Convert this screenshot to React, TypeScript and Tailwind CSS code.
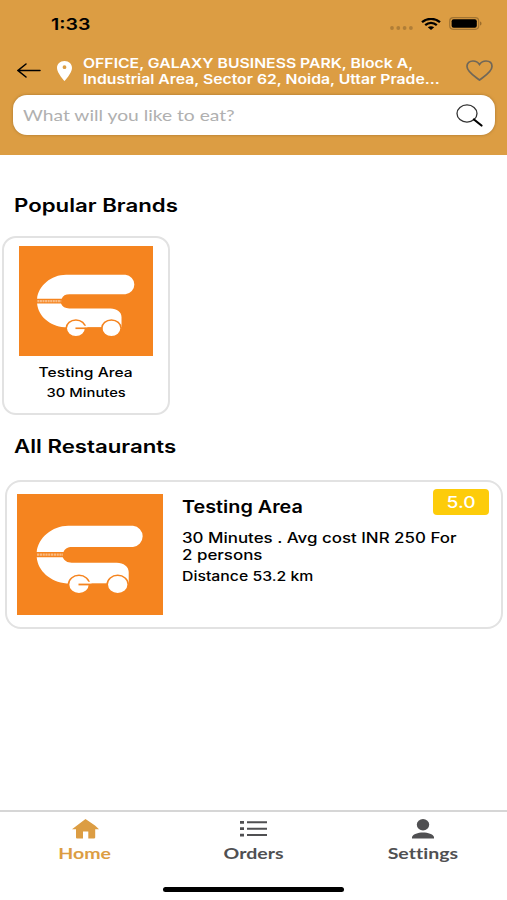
import React from 'react';

const Logo: React.FC<{ className?: string }> = ({ className }) => (
  <svg className={className} viewBox="0 0 146 121" preserveAspectRatio="none">
    <rect width="146" height="121" fill="#f5841f" />
    <path d="M19.700 58C21 44 35 31.700 51.300 31.700H116a10.700 10.700 0 0 1 0 21.300H55c-4.500 0-7 1.500-8.500 5z" fill="#fff" />
    <path d="M19.700 63.300H45.700c1.800 3.700 4.500 5.400 9 5.400H99.700c7 0 12 4 12 9.300V89.500H49.700C33 88 21 77 19.700 63.300z" fill="#fff" />
    <path d="M20 60.600H46" stroke="#fff" strokeOpacity=".45" strokeWidth="2.400" strokeDasharray="2.200 .6" />
    <ellipse cx="62" cy="90.500" rx="10.500" ry="9.200" fill="#fff" stroke="#f5841f" strokeWidth="1.600" />
    <ellipse cx="100.700" cy="90.500" rx="10.500" ry="9.200" fill="#fff" stroke="#f5841f" strokeWidth="1.600" />
    <path d="M70 87.500 74.500 88v2H70z" fill="#fff" />
    <path d="M61.500 90.500H91" stroke="#f5841f" strokeWidth="1.800" />
  </svg>
);

const tabs = [
  {
    label: 'Home',
    color: 'text-[#dc9d43]',
    icon: (
      <svg className="ml-[2px] h-5 w-[27px]" viewBox="0 0 27 20" fill="currentColor">
        <path d="M13.500 0 23 6.500 27 10.300H23.200V18.500Q23.200 19.500 22 19.500H16.300V12.500H11V19.500H5Q4 19.500 4 18.500V10.300H0z" />
      </svg>
    ),
  },
  {
    label: 'Orders',
    color: 'text-[#505052]',
    icon: (
      <svg className="h-5 w-[27px]" viewBox="0 0 27 20" fill="currentColor">
        <path d="M0 2h4v2.700H0zM7 2.300h20v2H7zM0 8.300h4V11H0zM7 8.700h20v2H7zM0 14.700h4v2.700H0zM7 15h20v2H7z" />
      </svg>
    ),
  },
  {
    label: 'Settings',
    color: 'text-[#505052]',
    icon: (
      <svg className="h-5 w-[22px]" viewBox="0 0 22 20" fill="currentColor">
        <ellipse cx="11" cy="5.700" rx="6.200" ry="5.700" />
        <path d="M0 19.500V18c1-3 6-4.600 11-4.600S21 15 22 18v1.500z" />
      </svg>
    ),
  },
];

const App: React.FC = () => {
  return (
    <div className="flex h-[900px] w-[507px] flex-col overflow-hidden bg-white font-['Inter',sans-serif] text-black">
      <header className="h-[155px] shrink-0 bg-[#dc9d43]">
        <div className="flex h-[47px] items-center pr-[25px] pl-[51px]">
          <span className="origin-left scale-x-[1.22] text-[16px] font-semibold">1:33</span>
          <div className="ml-auto flex items-center">
            <svg className="mt-[8px] mr-[8px] h-1 w-[23px]" viewBox="0 0 23 4" fill="#b07e37">
              <circle cx="2" cy="2" r="1.900" />
              <circle cx="8.300" cy="2" r="1.900" />
              <circle cx="14.600" cy="2" r="1.900" />
              <circle cx="20.900" cy="2" r="1.900" />
            </svg>
            <svg className="mr-[8px] h-[12px] w-5" viewBox="0 0 20 12" preserveAspectRatio="none" fill="none" stroke="#000" strokeWidth="2.300">
              <path d="M1 4.200C6-.2 14-.2 19 4.200M4.200 7.200c3.500-3 8.100-3 11.600 0" />
              <path d="M6.800 9.300c2-1.500 4.400-1.500 6.400 0L10 12z" fill="#000" stroke="none" />
            </svg>
            <svg className="h-[13px] w-[33px]" viewBox="0 0 33 13">
              <rect x=".7" y=".7" width="29" height="11.600" rx="3.500" fill="none" stroke="#a27432" strokeWidth="1.200" />
              <rect x="2.600" y="2.300" width="25.200" height="8.400" rx="2" fill="#000" />
              <path d="M31 4.500c2 .5 2 3.500 0 4z" fill="#9c6c2b" />
            </svg>
          </div>
        </div>
        <div className="flex h-[47px] items-center pr-[14px] pl-[17px]">
          <svg className="h-4 w-6 shrink-0" viewBox="0 0 24 16" fill="none" stroke="#000" strokeWidth="1.500" strokeLinecap="round">
            <path d="M1 7.500h22M9 1 1 7.500l8 6.500" />
          </svg>
          <svg className="ml-[16px] h-5 w-[15px] shrink-0" viewBox="0 0 15 20">
            <path fill="#fff" fillRule="evenodd" d="M7.500 0C3 0 0 3 0 7c0 5 7.500 13 7.500 13S15 12 15 7c0-4-3-7-7.500-7zm0 4.300a1.900 1.900 0 1 0 0 3.800 1.900 1.900 0 0 0 0-3.800z" />
          </svg>
          <p className="mt-[2px] ml-[11px] origin-left scale-x-[1.212] text-[13px] leading-[15.500px] font-semibold whitespace-nowrap text-white">
            OFFICE, GALAXY BUSINESS PARK, Block A,
            <br />
            Industrial Area, Sector 62, Noida, Uttar Prade...
          </p>
          <svg className="ml-auto h-[21px] w-[27px] shrink-0" viewBox="0 0 27 21" fill="none" stroke="#706758" strokeWidth="1.700">
            <path d="M13.500 20C9 16.500 1 12 1 6.500 1 3 3.500 1 7 1c3 0 5 1.200 6.500 3.500C15 2.200 17 1 20 1c3.500 0 6 2 6 5.500 0 5.500-8 10-12.500 13.500z" />
          </svg>
        </div>
        <div className="mr-[12px] ml-[13px] mt-[1px] flex h-[40px] items-center rounded-[14px] bg-white pr-[12px] pl-[10px] shadow-[0_0_3px_#80591f99]">
          <span className="origin-left scale-x-[1.2] font-['Lato',sans-serif] text-[16px] whitespace-nowrap text-[#b0b0b0]">What will you like to eat?</span>
          <svg className="ml-auto h-[23px] w-[27px] shrink-0" viewBox="0 0 27 23" fill="none">
            <ellipse cx="11" cy="9.500" rx="10" ry="8.600" stroke="#333" strokeWidth="1.300" />
            <path d="m18 15.500 7.500 6" stroke="#000" strokeWidth="2.200" strokeLinecap="round" />
          </svg>
        </div>
      </header>

      <main className="flex-1">
        <h2 className="mt-[38px] ml-[14px] w-max origin-left scale-x-[1.235] text-[18px] leading-[26px] font-semibold">Popular Brands</h2>
        <div className="mt-[17px] ml-[2px] flex h-[179px] w-[168px] flex-col items-center rounded-[14px] border-2 border-[#e2e2e2] pt-[8px]">
          <Logo className="h-[110px] w-[134px]" />
          <span className="mt-[7px] scale-x-[1.25] text-[12.500px] leading-5 font-medium">Testing Area</span>
          <span className="scale-x-[1.23] text-[12px] leading-5 font-medium">30 Minutes</span>
        </div>
        <h2 className="mt-[19px] ml-[14px] w-max origin-left scale-x-[1.235] text-[18px] leading-[26px] font-semibold">All Restaurants</h2>
        <div className="mt-[20px] mr-[4px] ml-[5px] flex h-[149px] rounded-[16px] border-2 border-[#e2e2e2] pt-[12px] pr-[12px] pl-[10px]">
          <Logo className="h-[121px] w-[146px] shrink-0" />
          <div className="relative ml-[19px] flex-1">
            <h3 className="mt-[2px] w-max origin-left scale-x-[1.165] text-[17px] leading-[22px] font-semibold">Testing Area</h3>
            <p className="mt-[11px] w-max origin-left scale-x-[1.208] text-[14px] leading-[17px] font-medium">
              30 Minutes . Avg cost INR 250 For
              <br />2 persons
            </p>
            <p className="mt-[4px] w-max origin-left scale-x-[1.215] text-[13px] leading-[18px] font-medium">Distance 53.2 km</p>
            <div className="absolute -top-[5px] right-0 flex h-[26px] w-[56px] items-center justify-center rounded-[4px] bg-[#fdcc0a] text-white">
              <span className="scale-x-[1.2] text-[16px] font-medium">5.0</span>
            </div>
          </div>
        </div>
      </main>

      <nav className="h-[90px] shrink-0 border-t-2 border-[#d6d6d6]">
        <div className="grid h-[72px] grid-cols-3">
          {tabs.map((tab) => (
            <div key={tab.label} className={`flex flex-col items-center pt-[7px] ${tab.color}`}>
              {tab.icon}
              <span className="mt-[2px] scale-x-[1.22] font-['Lato',sans-serif] text-[16px] leading-6 font-bold [font-variant-ligatures:none]">{tab.label}</span>
            </div>
          ))}
        </div>
        <div className="mx-auto mt-[3px] h-[5px] w-[181px] rounded-full bg-black" />
      </nav>
    </div>
  );
};

export default App;
